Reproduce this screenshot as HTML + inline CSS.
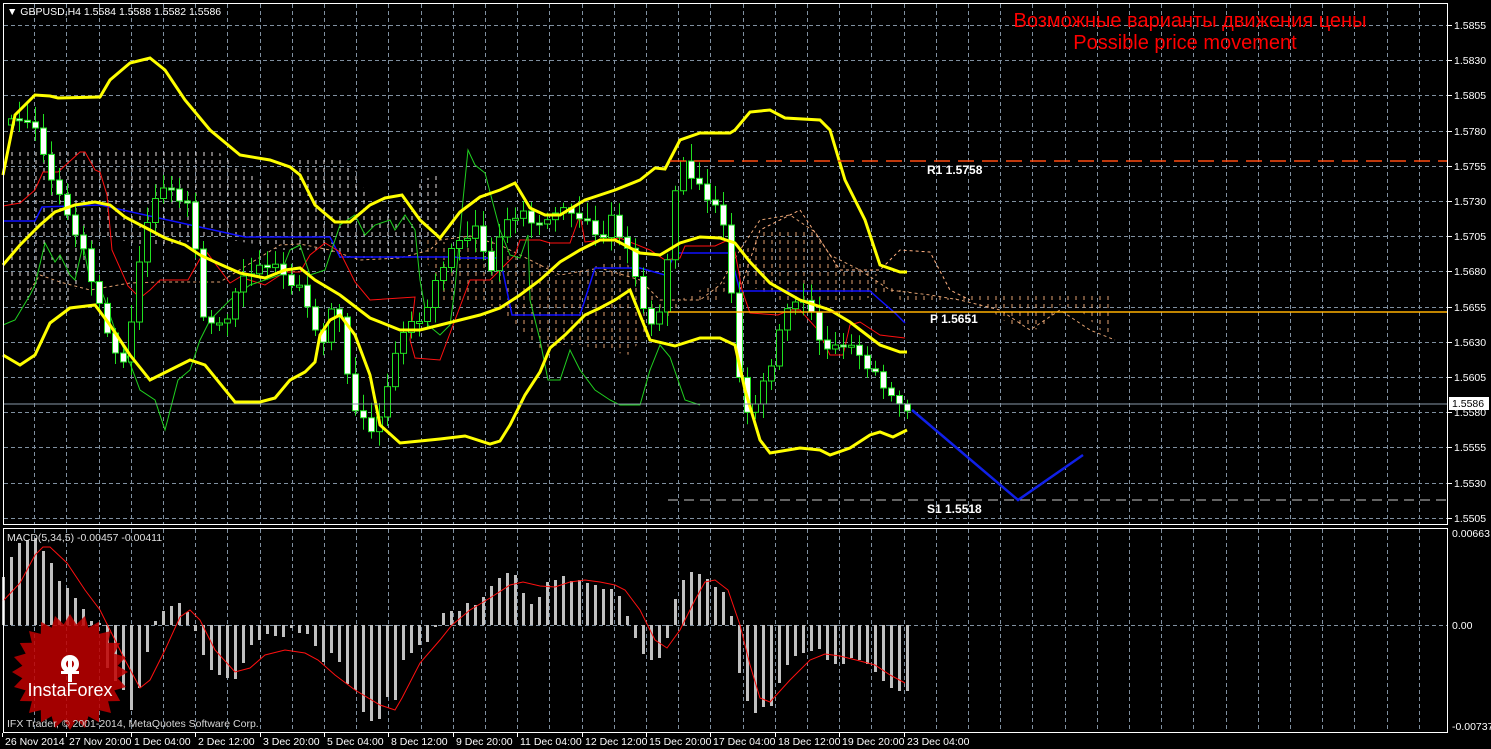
<!DOCTYPE html>
<html><head><meta charset="utf-8"><style>
html,body{margin:0;padding:0;background:#000;}
svg{display:block;}
text{font-family:"Liberation Sans",sans-serif;}
</style></head><body>
<svg id="s" width="1491" height="749" xmlns="http://www.w3.org/2000/svg">
<defs>
<pattern id="vd" width="8" height="8" patternUnits="userSpaceOnUse"><line x1="4" y1="0" x2="4" y2="4" stroke="#e8e0e0" stroke-width="1"/></pattern>
<pattern id="vo" width="8" height="8" patternUnits="userSpaceOnUse"><line x1="4" y1="0" x2="4" y2="4" stroke="#e0a070" stroke-width="1"/></pattern>
</defs>
<rect width="1491" height="749" fill="#000"/>
<g id="grid" stroke="#8090a0" stroke-width="1" stroke-dasharray="4,3"></g>
<polygon points="8,150 60,150 80,152 140,150 175,152 200,150 215,150 260,180 290,180 300,158 320,158 345,160 360,175 370,210 400,210 420,180 440,175 440,240 400,258 340,258 320,250 280,250 260,245 230,240 200,240 170,245 140,245 120,240 100,240 90,260 70,300 40,305 20,305 8,300" fill="url(#vd)"/>
<polygon points="420,240 440,240 460,250 480,235 500,245 520,260 545,262 560,280 590,268 610,262 620,255 640,280 660,300 680,300 720,300 740,260 760,230 790,230 815,232 830,260 860,270 880,275 890,285 900,300 930,300 950,300 970,295 1000,293 1060,293 1115,293 1115,340 1100,330 1080,310 1060,305 1040,330 1010,325 990,310 960,300 930,295 900,290 880,295 860,300 840,300 820,305 800,305 780,300 760,290 740,285 720,282 700,290 680,300 670,320 660,320 640,340 630,355 600,350 580,345 560,345 540,348 520,330 500,310 480,300 460,300 440,302" fill="url(#vo)"/>
<polyline fill="none" stroke="#e0a070" stroke-dasharray="3,3" points="30,290 40,275 60,282 90,290 130,283 160,282 220,282 280,245 300,244 330,250 360,260 400,258 430,250 440,240 470,236 500,245 560,275 600,268 640,280 660,300 700,300 720,285 740,250 760,220 790,215 815,232 830,255 860,270 890,290 930,295 960,300 1000,310 1030,330 1060,310 1090,330 1115,340"/>
<polyline fill="none" stroke="#ffb080" stroke-dasharray="3,3" points="740,290 760,230 790,215 800,210 820,240 840,270 880,270 900,250 930,252 950,290 970,300"/>
<polyline fill="none" stroke="#1010ff" stroke-width="1.5" points="3,221 35,221 42,207 100,205 245,237 250,237 255,237 330,237 340,257 455,257 460,258 500,258 512,315 580,315 595,268 640,268 665,275 675,253 730,253 740,291 800,291 870,291 880,300 895,313 905,323"/>
<polyline fill="none" stroke="#ff1010" stroke-width="1" points="3,206 20,203 35,190 43,172 58,172 80,152 85,152 95,170 100,172 107,195 112,250 128,286 140,298 150,290 160,280 188,280 205,250 230,283 240,277 265,285 285,272 300,272 310,255 325,243 340,252 355,282 370,300 415,297 410,340 415,358 440,360 470,280 490,280 515,255 520,240 540,240 550,243 570,243 580,215 585,242 620,238 650,250 665,260 680,258 685,246 715,246 728,240 735,252 742,290 750,313 778,315 790,310 800,310 818,330 830,355 843,355 850,325 860,322 880,335 905,338"/>
<polyline fill="none" stroke="#20d020" stroke-width="1" points="3,325 10,322 15,320 30,295 35,285 45,243 55,262 60,255 70,275 75,280 83,245 90,280 93,280 100,287 105,300 115,330 128,358 140,390 155,400 165,430 178,380 190,370 200,340 210,320 230,300 250,285 280,275 290,250 300,245 310,275 325,270 340,225 355,215 365,235 375,225 390,220 395,230 405,215 415,230 420,280 428,325 440,335 450,325 455,288 463,200 468,150 475,165 485,173 500,230 510,255 520,258 528,235 530,300 535,320 540,340 548,380 560,380 570,350 580,370 595,390 610,400 620,405 640,405 650,370 660,345 670,357 685,400 700,405"/>
<g id="candles"></g>
<polyline fill="none" stroke="#ffff00" stroke-width="3" points="3,175 15,115 35,95 50,96 58,98 100,97 110,80 130,63 150,58 165,70 185,100 210,130 240,155 270,160 290,167 300,175 315,205 335,222 350,222 370,205 385,198 402,195 420,220 440,238 460,212 480,197 500,190 515,183 530,208 545,215 560,215 585,200 615,190 640,180 655,168 665,169 680,140 700,133 730,133 735,130 750,112 770,110 785,118 820,120 830,130 845,180 865,220 880,265 900,272 907,272"/>
<polyline fill="none" stroke="#ffff00" stroke-width="3" points="3,265 20,245 40,225 55,212 75,205 95,202 110,205 125,217 150,230 165,238 185,245 200,255 215,262 240,273 265,278 285,270 300,268 315,280 340,295 370,318 400,330 420,330 440,325 460,320 480,315 500,308 520,295 540,280 560,262 580,250 600,240 615,240 640,253 660,255 680,243 700,237 720,238 735,243 750,262 770,283 800,300 830,310 850,322 880,345 900,352 907,352"/>
<polyline fill="none" stroke="#ffff00" stroke-width="3" points="3,355 20,365 35,355 50,323 70,308 95,305 110,325 130,355 150,380 170,370 190,360 205,365 235,402 260,402 275,398 290,380 305,372 315,362 320,335 330,320 340,315 355,335 370,375 380,425 400,443 420,441 440,439 465,436 490,444 500,441 510,425 525,395 540,372 550,348 565,335 585,315 600,308 615,300 630,290 650,340 675,346 700,338 720,338 735,345 745,390 760,440 770,453 800,448 820,450 830,455 850,448 870,435 880,432 893,437 907,430"/>
<line x1="3" y1="404" x2="1448" y2="404" stroke="#8898a8"/>
<line x1="670" y1="161" x2="1448" y2="161" stroke="#ff4a10" stroke-width="1.5" stroke-dasharray="16,8"/>
<line x1="668" y1="312" x2="1448" y2="312" stroke="#ffb000" stroke-width="1.5"/>
<line x1="668" y1="500" x2="1448" y2="500" stroke="#c8c8c8" stroke-dasharray="10,6"/>
<polyline fill="none" stroke="#1020e8" stroke-width="2.5" points="912,410 1018,500 1083,455"/>
<g font-family="Liberation Mono,monospace" font-size="12" font-weight="bold" fill="#fff">
<text x="927" y="174">R1 1.5758</text>
<text x="930" y="323">P 1.5651</text>
<text x="927" y="513">S1 1.5518</text>
</g>
<text x="1190" y="27" font-size="20" fill="#ff0000" text-anchor="middle">Возможные варианты движения цены</text>
<text x="1185" y="49" font-size="20" fill="#ff0000" text-anchor="middle">Possible price movement</text>
<g id="macd"></g>
<polyline fill="none" stroke="#ff1010" stroke-width="1" points="3,601 20,583 35,555 43,547 50,547 67,563 85,590 100,610 115,640 125,660 140,688 150,680 165,650 180,617 190,610 200,620 215,650 235,672 250,668 265,655 285,650 305,653 318,660 335,675 355,690 380,705 395,710 402,698 420,663 440,640 452,625 470,610 490,598 510,585 523,582 540,586 555,587 570,582 585,580 600,582 615,585 625,590 640,610 655,640 667,648 680,630 695,600 705,582 715,580 728,590 740,625 750,665 760,698 770,702 790,680 810,660 825,654 840,656 860,661 875,665 890,675 905,683"/>
<g transform="translate(70,672)">
<polygon id="star" fill="#c00000" fill-opacity="0.85"></polygon>
<g fill="#fff"><circle cx="0" cy="-8" r="9"/><circle cx="0" cy="-8" r="4" fill="#b00000"/><rect x="-2" y="-12" width="4" height="22"/><rect x="-9" y="-1" width="18" height="3"/></g>
<text x="0" y="24" font-size="18" fill="#fff" text-anchor="middle">InstaForex</text>
</g>
<text x="7" y="727" font-size="10.5" fill="#d8d8d8">IFX Trader, © 2001-2014, MetaQuotes Software Corp.</text>
<rect x="3.5" y="3.5" width="1444" height="521" fill="none" stroke="#fff"/>
<rect x="3.5" y="528.5" width="1444" height="204" fill="none" stroke="#fff"/>
<text x="7" y="15" font-size="10.5" fill="#fff">▼ GBPUSD,H4  1.5584 1.5588 1.5582 1.5586</text>
<text x="7" y="541" font-size="10.5" fill="#e0e0e0">MACD(5,34,5) -0.00457 -0.00411</text>
<g id="axis" font-size="10.5" fill="#fff"></g>
<rect x="1449" y="397" width="40" height="13" fill="#fff"/>
<text x="1452" y="407" font-size="10.5" fill="#000">1.5586</text>
</svg>
<script>
(function(){
var NS="http://www.w3.org/2000/svg";
function el(p,t,a){var e=document.createElementNS(NS,t);for(var key in a)e.setAttribute(key,a[key]);p.appendChild(e);return e;}
var g=document.getElementById('grid');
for(var gx=2+32.2;gx<1448;gx+=32.2){el(g,'line',{x1:Math.round(gx)+.5,y1:4,x2:Math.round(gx)+.5,y2:524});el(g,'line',{x1:Math.round(gx)+.5,y1:529,x2:Math.round(gx)+.5,y2:732});}
var ax=document.getElementById('axis');
for(var i=0;i<15;i++){var gy=25+i*35.2;el(g,'line',{x1:4,y1:Math.round(gy)+.5,x2:1448,y2:Math.round(gy)+.5});
 el(ax,'line',{x1:1448,y1:Math.round(gy)+.5,x2:1452,y2:Math.round(gy)+.5,stroke:'#fff'});
 var t=el(ax,'text',{x:1454,y:Math.round(gy)+4});t.textContent=(1.5855-i*0.0025).toFixed(4);}
el(g,'line',{x1:4,y1:625.5,x2:1448,y2:625.5});
[[537,'0.00663'],[629,'0.00'],[730,'-0.00737']].forEach(function(a){var t=el(ax,'text',{x:1452,y:a[0]});t.textContent=a[1];});
var labs=["26 Nov 2014","27 Nov 20:00","1 Dec 04:00","2 Dec 12:00","3 Dec 20:00","5 Dec 04:00","8 Dec 12:00","9 Dec 20:00","11 Dec 04:00","12 Dec 12:00","15 Dec 20:00","17 Dec 04:00","18 Dec 12:00","19 Dec 20:00","23 Dec 04:00"];
labs.forEach(function(l,j){var lx=2+j*64.4;el(ax,'line',{x1:Math.round(lx)+.5,y1:733,x2:Math.round(lx)+.5,y2:737,stroke:'#fff'});var t=el(ax,'text',{x:Math.round(lx)+3,y:745});t.textContent=l;});
var kp=[[7,125],[30,118],[45,160],[60,200],[80,240],[105,330],[125,370],[140,250],[160,180],[190,210],[205,330],[225,320],[245,270],[270,265],[300,290],[325,350],[335,280],[350,400],[370,435],[385,400],[400,330],[420,320],[440,270],[460,240],[475,230],[490,270],[505,220],[520,210],[540,230],[555,210],[580,215],[600,240],[610,215],[630,260],[650,330],[660,310],[680,155],[695,180],[715,210],[725,230],[735,330],[742,420],[755,400],[770,370],[780,320],[795,300],[810,310],[825,355],[840,340],[860,355],[880,380],[890,400],[905,408]];
function interp(px){for(var m=1;m<kp.length;m++){if(px<=kp[m][0]){var a=kp[m-1],b=kp[m];return a[1]+(b[1]-a[1])*(px-a[0])/(b[0]-a[0]);}}return kp[kp.length-1][1];}
var cg=document.getElementById('candles'),prev=interp(7);
for(var cx=11,k=0;cx<=907;cx+=8,k++){var c=interp(cx)+((k*37)%11-5);var o=prev;var tp=Math.min(o,c),bt=Math.max(o,c);if(bt-tp<2)bt=tp+2;
 var wt=tp-4-(k*13)%14,wb=bt+4+(k*7)%12;
 el(cg,'line',{x1:cx+.5,y1:wt,x2:cx+.5,y2:wb,stroke:'#20e020'});
 el(cg,'rect',{x:cx-2.5,y:tp,width:6,height:bt-tp,fill:(c>o?'#fff':'#000'),stroke:'#20e020'});prev=c;}
var mb=[[3,577],[11,557],[19,543],[27,540],[35,538],[43,551],[51,563],[59,581],[67,588],[75,598],[83,609],[91,621],[99,623],[107,668],[115,681],[123,690],[131,710],[139,688],[147,652],[155,621],[163,611],[171,606],[179,603],[187,612],[195,631],[203,655],[211,670],[219,675],[227,678],[235,679],[243,663],[251,645],[259,640],[267,634],[275,636],[283,637],[291,628],[299,633],[307,634],[315,646],[323,662],[331,653],[339,662],[347,684],[355,690],[363,712],[371,721],[379,719],[387,697],[395,700],[403,660],[411,653],[419,645],[427,642],[435,627],[443,613],[451,611],[459,611],[467,603],[475,605],[483,597],[491,586],[499,578],[507,573],[515,575],[523,593],[531,604],[539,597],[547,582],[555,580],[563,576],[571,581],[579,580],[587,583],[595,585],[603,589],[611,589],[619,596],[627,616],[635,638],[643,654],[651,660],[659,658],[667,638],[675,599],[683,580],[691,572],[699,574],[707,579],[715,587],[723,592],[731,616],[739,673],[747,701],[755,713],[763,707],[771,706],[779,683],[787,665],[795,656],[803,653],[811,651],[819,649],[827,660],[835,664],[843,664],[851,658],[859,660],[867,664],[875,672],[883,681],[891,688],[899,691],[907,691]];
var mg=document.getElementById('macd');
mb.forEach(function(b){var y0=625,y1=b[1];el(mg,'rect',{x:b[0]-1,y:Math.min(y0,y1),width:3,height:Math.max(1,Math.abs(y1-y0)),fill:'#c0c0c0'});});
var pts=[];for(var n=0;n<48;n++){var r=n%2?48:58,ang=n*Math.PI/24;pts.push((r*Math.cos(ang)).toFixed(1)+','+(r*Math.sin(ang)).toFixed(1));}
document.getElementById('star').setAttribute('points',pts.join(' '));
})();
</script>
</body></html>
